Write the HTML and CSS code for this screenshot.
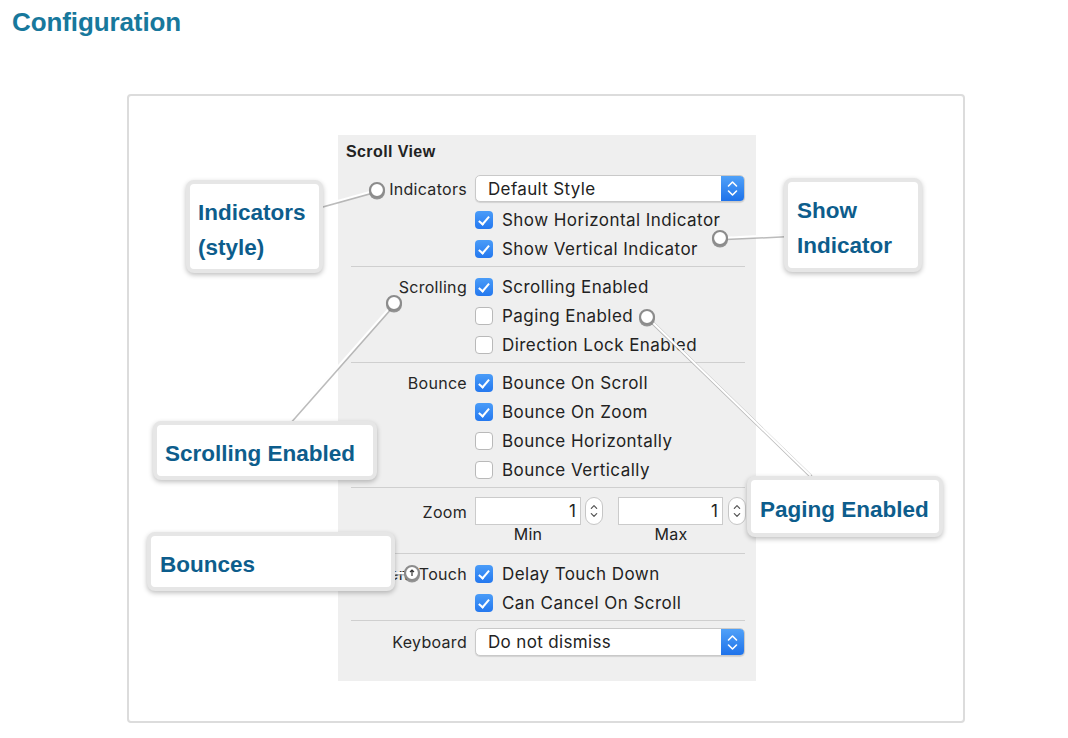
FILE: index.html
```html
<!DOCTYPE html>
<html>
<head>
<meta charset="utf-8">
<link rel="stylesheet" href="styles.css">
</head>
<body>
<div class="page">
  <h2 class="title">Configuration</h2>
  <div class="figure">
    <div class="panel">
      <div class="panel-title">Scroll View</div>

      <div class="row row-popup">
        <div class="label">Indicators</div>
        <div class="popup"><span class="popup-text">Default Style</span><span class="popup-btn"><svg width="23" height="27" viewBox="0 0 23 27"><path d="M7.5 11 L11.5 7 L15.5 11 M7.5 16 L11.5 20 L15.5 16" fill="none" stroke="#fff" stroke-width="1.6" stroke-linecap="round" stroke-linejoin="round"/></svg></span></div>
      </div>
      <div class="row"><div class="label"></div><div class="opt"><span class="cb on"></span>Show Horizontal Indicator</div></div>
      <div class="row"><div class="label"></div><div class="opt"><span class="cb on"></span>Show Vertical Indicator</div></div>
      <div class="sep"></div>

      <div class="row"><div class="label">Scrolling</div><div class="opt"><span class="cb on"></span>Scrolling Enabled</div></div>
      <div class="row"><div class="label"></div><div class="opt"><span class="cb"></span>Paging Enabled</div></div>
      <div class="row"><div class="label"></div><div class="opt"><span class="cb"></span>Direction Lock Enabled</div></div>
      <div class="sep"></div>

      <div class="row"><div class="label">Bounce</div><div class="opt"><span class="cb on"></span>Bounce On Scroll</div></div>
      <div class="row"><div class="label"></div><div class="opt"><span class="cb on"></span>Bounce On Zoom</div></div>
      <div class="row"><div class="label"></div><div class="opt"><span class="cb"></span>Bounce Horizontally</div></div>
      <div class="row"><div class="label"></div><div class="opt"><span class="cb"></span>Bounce Vertically</div></div>
      <div class="sep"></div>

      <div class="zoom-block">
        <div class="row row-zoom">
          <div class="label">Zoom</div>
          <div class="zoom-fields">
            <div class="zf">
              <div class="field-wrap"><div class="field f-min">1</div><div class="stepper"><svg width="18" height="28" viewBox="0 0 18 28"><path d="M6 11 L9 8 L12 11 M6 17 L9 20 L12 17" fill="none" stroke="#555" stroke-width="1.4" stroke-linecap="round" stroke-linejoin="round"/></svg></div></div>
              <div class="sub sub-min">Min</div>
            </div>
            <div class="zf">
              <div class="field-wrap"><div class="field f-max">1</div><div class="stepper"><svg width="18" height="28" viewBox="0 0 18 28"><path d="M6 11 L9 8 L12 11 M6 17 L9 20 L12 17" fill="none" stroke="#555" stroke-width="1.4" stroke-linecap="round" stroke-linejoin="round"/></svg></div></div>
              <div class="sub sub-max">Max</div>
            </div>
          </div>
        </div>
      </div>
      <div class="sep"></div>

      <div class="row"><div class="label">Content Touch</div><div class="opt"><span class="cb on"></span>Delay Touch Down</div></div>
      <div class="row"><div class="label"></div><div class="opt"><span class="cb on"></span>Can Cancel On Scroll</div></div>
      <div class="sep"></div>

      <div class="row row-popup row-kb">
        <div class="label">Keyboard</div>
        <div class="popup"><span class="popup-text">Do not dismiss</span><span class="popup-btn"><svg width="23" height="27" viewBox="0 0 23 27"><path d="M7.5 11 L11.5 7 L15.5 11 M7.5 16 L11.5 20 L15.5 16" fill="none" stroke="#fff" stroke-width="1.6" stroke-linecap="round" stroke-linejoin="round"/></svg></span></div>
      </div>
    </div>

    <svg class="overlay" width="838" height="629" viewBox="0 0 838 629">
      <g stroke-linecap="round">
        <g stroke="#a0a0a0" stroke-width="3.2" opacity="0.7" transform="translate(0.6 1)">
          <line x1="250" y1="96" x2="196" y2="111"/>
          <line x1="593" y1="144" x2="658" y2="141"/>
          <line x1="267" y1="209" x2="163" y2="327"/>
          <line x1="520" y1="223" x2="683" y2="381"/>
          <line x1="285" y1="479" x2="268" y2="479"/>
        </g>
        <g stroke="#ffffff" stroke-width="2.2">
          <line x1="250" y1="96" x2="196" y2="111"/>
          <line x1="593" y1="144" x2="658" y2="141"/>
          <line x1="267" y1="209" x2="163" y2="327"/>
          <line x1="520" y1="223" x2="683" y2="381"/>
          <line x1="285" y1="479" x2="268" y2="479"/>
        </g>
      </g>
      <g>
        <circle cx="250" cy="97.5" r="8" fill="#6e6e6e" opacity="0.7"/>
        <circle cx="250" cy="96" r="7" fill="#fff" stroke="#8c8c8c" stroke-width="2.2"/>
        <circle cx="593" cy="145.5" r="8" fill="#6e6e6e" opacity="0.7"/>
        <circle cx="593" cy="144" r="7" fill="#fff" stroke="#8c8c8c" stroke-width="2.2"/>
        <circle cx="267" cy="210.5" r="8" fill="#6e6e6e" opacity="0.7"/>
        <circle cx="267" cy="209" r="7" fill="#fff" stroke="#8c8c8c" stroke-width="2.2"/>
        <circle cx="520" cy="224.5" r="8" fill="#6e6e6e" opacity="0.7"/>
        <circle cx="520" cy="223" r="7" fill="#fff" stroke="#8c8c8c" stroke-width="2.2"/>
        <circle cx="285" cy="480.5" r="8" fill="#6e6e6e" opacity="0.7"/>
        <circle cx="285" cy="479" r="7" fill="#fff" stroke="#8c8c8c" stroke-width="2.2"/>
        <path d="M285 476 L285 482 M283 478 L285 476 L287 478" fill="none" stroke="#333" stroke-width="1.2"/>
      </g>
    </svg>

    <div class="callout c-indicators">Indicators<br>(style)</div>
    <div class="callout c-show">Show<br>Indicator</div>
    <div class="callout c-scroll single">Scrolling Enabled</div>
    <div class="callout c-paging single">Paging Enabled</div>
    <div class="callout c-bounces single">Bounces</div>
  </div>
</div>
</body>
</html>
```

FILE: styles.css
```css
* { box-sizing: border-box; }
html, body { margin: 0; padding: 0; background: #fff; }
body { font-family: "Liberation Sans", Arial, sans-serif; }

.page { padding: 0 12px; }

.title {
  margin: 0;
  padding-top: 7px;
  font-size: 26px;
  line-height: 30px;
  font-weight: bold;
  color: #17789c;
  letter-spacing: -0.1px;
}

.figure {
  position: relative;
  margin: 57px 0 0 115px;
  width: 838px;
  height: 629px;
  border: 2px solid #dcdcdc;
  border-radius: 4px;
  padding: 39px 0 0 209px;
}

.panel {
  width: 418px;
  height: 546px;
  background: #efefef;
  font-family: Inter, "Open Sans", sans-serif;
  color: #222;
  padding-right: 11px;
}

.panel-title {
  padding: 7px 0 0 8px;
  height: 38px;
  font-family: "Liberation Sans", Arial, sans-serif;
  font-weight: bold;
  font-size: 16px;
  letter-spacing: 0.4px;
  line-height: 20px;
  color: #222;
}

.row {
  display: grid;
  grid-template-columns: 129px 1fr;
  column-gap: 8px;
  height: 29px;
  align-items: center;
  padding-top: 2px;
}

.row-popup { height: 31px; padding-top: 0; }
.row-kb { height: 34px; padding-top: 3px; align-items: start; }
.row-kb .label { line-height: 28px; }

.label {
  text-align: right;
  font-size: 16px;
  letter-spacing: 0.3px;
  white-space: nowrap;
  color: #262626;
}

.opt {
  display: flex;
  align-items: center;
  font-size: 17px;
  letter-spacing: 0.45px;
  white-space: nowrap;
  color: #222;
}

.cb {
  width: 18px;
  height: 18px;
  border-radius: 4px;
  background: #fff;
  border: 1px solid #b9b9b9;
  margin-right: 9px;
  flex: none;
  position: relative;
}

.cb.on {
  border: none;
  background: linear-gradient(#4a9cf8, #2478ef);
}

.cb.on::after {
  content: "";
  position: absolute;
  left: 6px;
  top: 3px;
  width: 4px;
  height: 9px;
  border-right: 2px solid #fff;
  border-bottom: 2px solid #fff;
  transform: rotate(40deg);
}

.popup {
  display: flex;
  height: 27px;
  background: #fff;
  border: 1px solid #c9c9c9;
  border-radius: 5px;
  box-shadow: 0 1px 1px rgba(0,0,0,0.12);
  overflow: hidden;
  font-size: 17px;
  letter-spacing: 0.35px;
}

.row-kb .popup { height: 28px; }

.popup-text {
  flex: 1;
  padding-left: 12px;
  line-height: 26px;
  color: #222;
}

.popup-btn {
  width: 23px;
  flex: none;
  background: linear-gradient(#50a1f8, #1e72ea);
  display: flex;
  align-items: center;
  justify-content: center;
}

.sep {
  height: 1px;
  background: #cfcfcf;
  margin: 4px 0 4px 13px;
}

.zoom-block { padding: 5px 0 7px; }
.row-zoom { height: 45px; align-items: start; padding-top: 0; }
.row-zoom .label { line-height: 30px; }

.zoom-fields { display: flex; gap: 15px; }
.zf { display: flex; flex-direction: column; }
.field-wrap { display: flex; gap: 4px; align-items: center; }

.field {
  height: 28px;
  background: #fff;
  border: 1px solid #cbcbcb;
  text-align: right;
  padding-right: 4px;
  font-size: 17px;
  line-height: 27px;
}
.f-min { width: 106px; }
.f-max { width: 105px; margin-right: 1px; }

.stepper {
  width: 18px;
  height: 28px;
  background: #fff;
  border: 1px solid #c6c6c6;
  border-radius: 9px;
  display: flex;
  align-items: center;
  justify-content: center;
  overflow: hidden;
}

.sub {
  font-size: 16px;
  letter-spacing: 0.3px;
  line-height: 19px;
  text-align: center;
}
.sub-min { width: 106px; }
.sub-max { width: 106px; }

.overlay {
  position: absolute;
  left: -2px;
  top: -2px;
  pointer-events: none;
}

.callout {
  position: absolute;
  background: #fff;
  border: 4px solid #e6e6e6;
  border-radius: 8px;
  box-shadow: 0 2px 5px rgba(0,0,0,0.25);
  font-family: "Liberation Sans", Arial, sans-serif;
  font-weight: bold;
  font-size: 22.5px;
  line-height: 35px;
  color: #0d5d8c;
  padding: 11px 0 0 8px;
  white-space: nowrap;
}

.callout.single {
  display: flex;
  align-items: center;
  padding-top: 5px;
}

.c-indicators { left: 57px; top: 84px; width: 137px; height: 93px; }
.c-show { left: 655px; top: 82px; width: 138px; height: 94px; padding-left: 9px; }
.c-scroll { left: 24px; top: 325px; width: 224px; height: 59px; }
.c-paging { left: 618px; top: 380px; width: 196px; height: 61px; padding-left: 9px; }
.c-bounces { left: 18px; top: 436px; width: 248px; height: 59px; padding-left: 9px; }
```
